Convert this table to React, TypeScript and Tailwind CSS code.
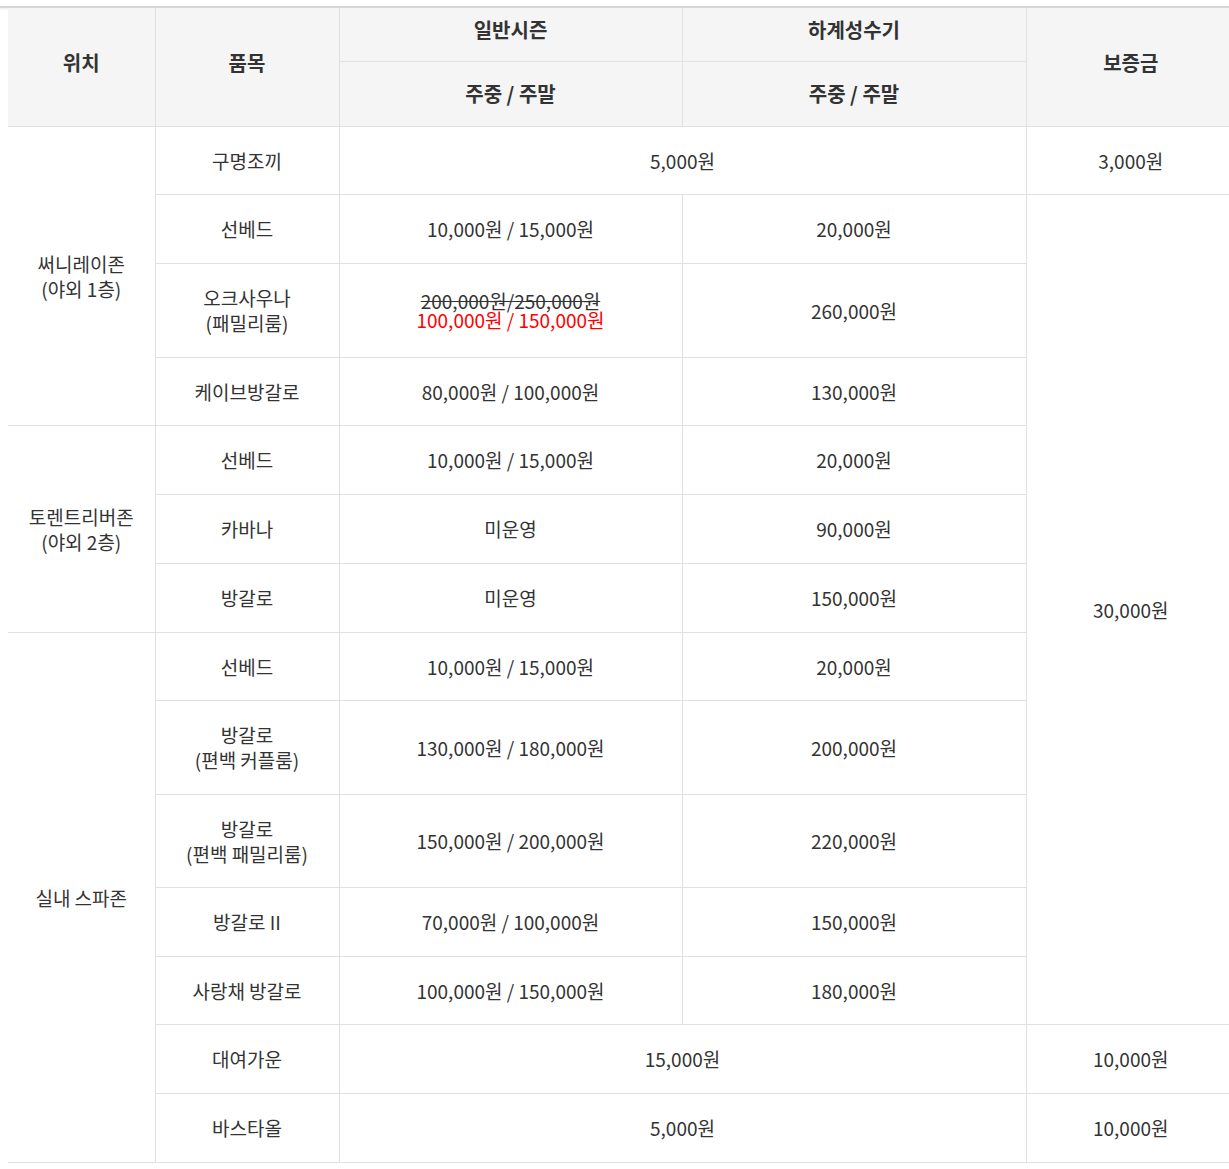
import React from 'react';

type Row = {
  item: React.ReactNode;
  h: string;
  normal?: React.ReactNode;
  peak?: React.ReactNode;
};

const cell = 'border border-[#e1e1e1] text-center align-middle p-0';
const th = 'border border-[#e1e1e1] text-center align-middle p-0 font-bold text-[20px] bg-[#f5f5f5] text-[#333]';

const App: React.FC = () => {
  const sunny: Row[] = [
    { item: '선베드', h: 'h-[69px]', normal: '10,000원 / 15,000원', peak: '20,000원' },
    {
      item: (
        <>
          오크사우나
          <br />
          (패밀리룸)
        </>
      ),
      h: 'h-[94px]',
      normal: (
        <div className="leading-[19px]">
          <del>200,000원/250,000원</del>
          <br />
          <span className="text-[#ff0000]">100,000원 / 150,000원</span>
        </div>
      ),
      peak: '260,000원',
    },
    { item: '케이브방갈로', h: 'h-[68px]', normal: '80,000원 / 100,000원', peak: '130,000원' },
  ];

  const torrent: Row[] = [
    { item: '선베드', h: 'h-[69px]', normal: '10,000원 / 15,000원', peak: '20,000원' },
    { item: '카바나', h: 'h-[69px]', normal: '미운영', peak: '90,000원' },
    { item: '방갈로', h: 'h-[69px]', normal: '미운영', peak: '150,000원' },
  ];

  const spa: Row[] = [
    { item: '선베드', h: 'h-[68px]', normal: '10,000원 / 15,000원', peak: '20,000원' },
    {
      item: (
        <>
          방갈로
          <br />
          (편백 커플룸)
        </>
      ),
      h: 'h-[94px]',
      normal: '130,000원 / 180,000원',
      peak: '200,000원',
    },
    {
      item: (
        <>
          방갈로
          <br />
          (편백 패밀리룸)
        </>
      ),
      h: 'h-[93px]',
      normal: '150,000원 / 200,000원',
      peak: '220,000원',
    },
    { item: '방갈로 II', h: 'h-[69px]', normal: '70,000원 / 100,000원', peak: '150,000원' },
    { item: '사랑채 방갈로', h: 'h-[68px]', normal: '100,000원 / 150,000원', peak: '180,000원' },
  ];

  const location = (lines: string[], span: number) => (
    <td rowSpan={span} className={`${cell} border-l-0`}>
      {lines.map((l, i) => (
        <React.Fragment key={i}>
          {i > 0 && <br />}
          {l}
        </React.Fragment>
      ))}
    </td>
  );

  const priceCells = (r: Row) => (
    <>
      <td className={cell}>{r.item}</td>
      <td className={cell}>{r.normal}</td>
      <td className={cell}>{r.peak}</td>
    </>
  );

  return (
    <div
      className="bg-white min-h-[1169px] overflow-hidden text-[#333] text-[19px] leading-[25px]"
      style={{ fontFamily: '"Noto Sans CJK KR", "Noto Sans", sans-serif' }}
    >
      <div className="h-[6px]" />
      <div className="h-[2px] bg-[#d6d6d6] shadow-[0_1px_2px_rgba(0,0,0,0.08)]" />
      <div className="pl-2">
        <table className="w-[1227px] table-fixed border-collapse">
          <colgroup>
            <col className="w-[147px]" />
            <col className="w-[184px]" />
            <col className="w-[343px]" />
            <col className="w-[344px]" />
            <col className="w-[209px]" />
          </colgroup>
          <thead>
            <tr className="h-[53px]">
              <th rowSpan={2} className={`${th} border-l-0 border-t-0 pb-[9px]`}>위치</th>
              <th rowSpan={2} className={`${th} border-t-0 pb-[9px]`}>품목</th>
              <th className={`${th} border-t-0 pb-[10px]`}>일반시즌</th>
              <th className={`${th} border-t-0 pb-[10px]`}>하계성수기</th>
              <th rowSpan={2} className={`${th} border-t-0 border-r-0 pb-[9px]`}>보증금</th>
            </tr>
            <tr className="h-[65px]">
              <th className={th}>주중 / 주말</th>
              <th className={th}>주중 / 주말</th>
            </tr>
          </thead>
          <tbody>
            <tr className="h-[68px]">
              {location(['써니레이존', '(야외 1층)'], 4)}
              <td className={cell}>구명조끼</td>
              <td colSpan={2} className={cell}>5,000원</td>
              <td className={`${cell} border-r-0`}>3,000원</td>
            </tr>
            {sunny.map((r, i) => (
              <tr key={`s${i}`} className={r.h}>
                {priceCells(r)}
                {i === 0 && (
                  <td rowSpan={11} className={`${cell} border-r-0`}>
                    30,000원
                  </td>
                )}
              </tr>
            ))}
            {torrent.map((r, i) => (
              <tr key={`t${i}`} className={r.h}>
                {i === 0 && location(['토렌트리버존', '(야외 2층)'], 3)}
                {priceCells(r)}
              </tr>
            ))}
            {spa.map((r, i) => (
              <tr key={`p${i}`} className={r.h}>
                {i === 0 && location(['실내 스파존'], 7)}
                {priceCells(r)}
              </tr>
            ))}
            <tr className="h-[69px]">
              <td className={cell}>대여가운</td>
              <td colSpan={2} className={cell}>15,000원</td>
              <td className={`${cell} border-r-0`}>10,000원</td>
            </tr>
            <tr className="h-[69px]">
              <td className={cell}>바스타올</td>
              <td colSpan={2} className={cell}>5,000원</td>
              <td className={`${cell} border-r-0`}>10,000원</td>
            </tr>
          </tbody>
        </table>
      </div>
    </div>
  );
};

export default App;
